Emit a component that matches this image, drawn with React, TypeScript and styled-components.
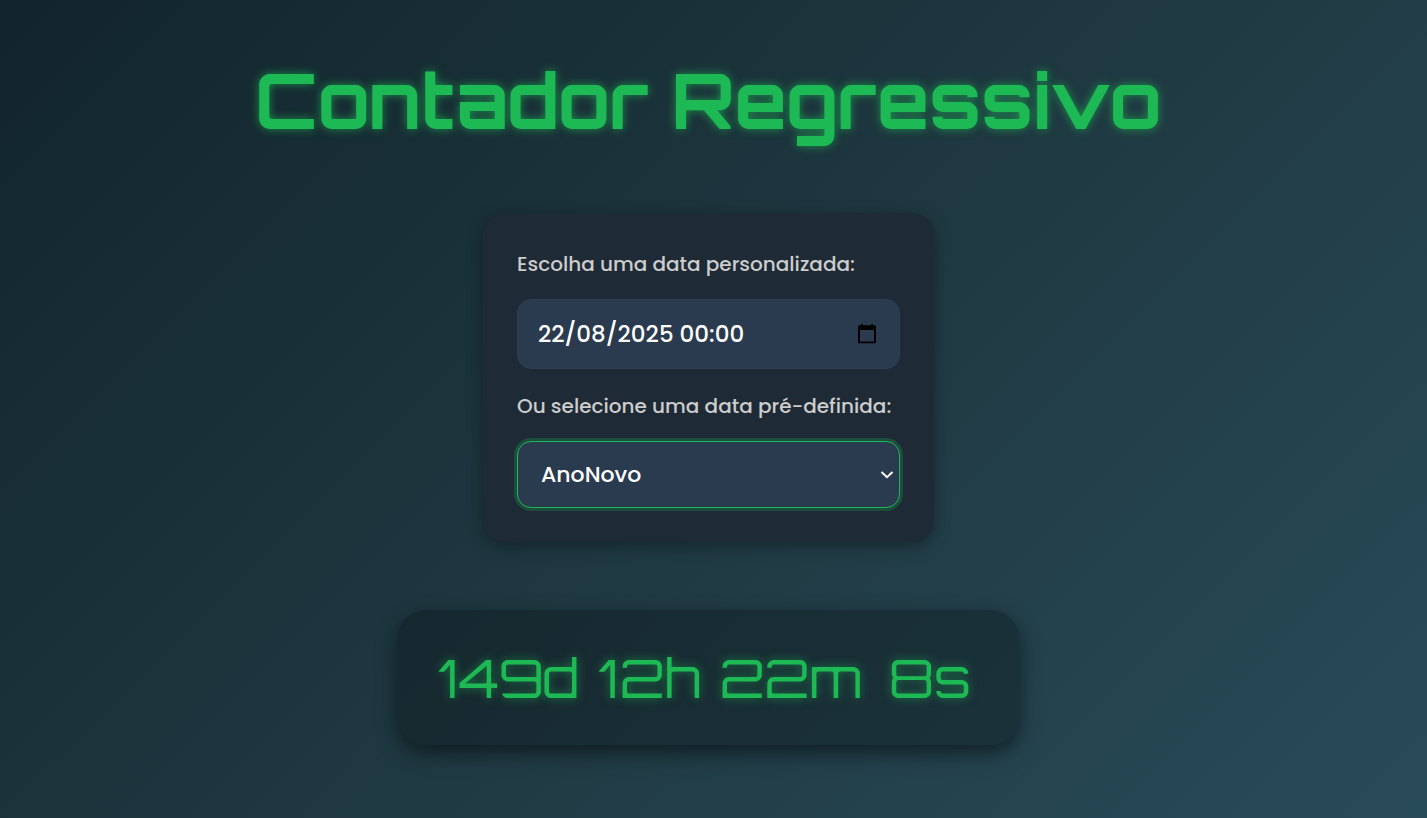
import React, { useState } from "react";
import styled, { createGlobalStyle, css } from "styled-components";

const GlobalStyle = createGlobalStyle`
  *, *::before, *::after { box-sizing: border-box; }
  body {
    margin: 0;
    background: #0f2027;
  }
`;

const display = '"Orbitron", "DejaVu Sans", sans-serif';
const body = '"Poppins", "Inter", sans-serif';
const green = "#1db954";

const Page = styled.main`
  display: flex;
  flex-direction: column;
  align-items: center;
  min-height: 100vh;
  padding: 54px 10px 54px 0;
  background: linear-gradient(135deg, #0f2027 -10%, #203a43 56%, #2c5364 122%);
  font-family: ${body};
`;

const Title = styled.h1`
  margin: 0 0 67px;
  color: ${green};
  font: 700 76px/92px ${display};
  text-align: center;
  text-shadow: 0 0 10px rgba(29, 185, 84, 0.7);
`;

const Card = styled.form`
  display: flex;
  flex-direction: column;
  gap: 20px;
  width: 100%;
  max-width: 451px;
  padding: 34px;
  border-radius: 22px;
  background: #1e2a36;
  box-shadow: 0 4px 16px rgba(0, 0, 0, 0.35);
`;

const Field = styled.div`
  display: flex;
  flex-direction: column;
  gap: 18px;
`;

const Label = styled.label`
  color: #cccccc;
  font-size: 20px;
  font-weight: 500;
  line-height: 34px;
  white-space: nowrap;
`;

const controlText = css`
  color: #ffffff;
  font-family: ${body};
  font-weight: 500;
`;

const DateBox = styled.div`
  display: flex;
  align-items: center;
  height: 70px;
  padding: 0 20px;
  border: 1px solid #2f3e50;
  border-radius: 14px;
  background: #2a3a4f;
`;

const DateInput = styled.input`
  ${controlText}
  flex: 1;
  min-width: 0;
  padding: 0;
  border: 0;
  outline: 0;
  background: transparent;
  font-size: 23px;
`;

const PickerButton = styled.button`
  display: flex;
  padding: 0;
  border: 0;
  background: transparent;
  color: #000000;
  cursor: pointer;
`;

const SelectBox = styled.div`
  display: grid;
  align-items: center;
  > * { grid-area: 1 / 1; }
`;

const Select = styled.select`
  ${controlText}
  width: 100%;
  height: 67px;
  padding: 0 23px;
  border: 1px solid ${green};
  border-radius: 14px;
  outline: 0;
  appearance: none;
  background: #2a3a4f;
  box-shadow: 0 0 0 3px rgba(29, 185, 84, 0.25);
  font-size: 22px;
`;

const Chevron = styled.svg`
  justify-self: end;
  margin-right: 6px;
  pointer-events: none;
`;

const Timer = styled.section`
  display: flex;
  justify-content: center;
  gap: 19px;
  width: 100%;
  max-width: 621px;
  margin-top: 68px;
  padding: 32px 38px 33px;
  border-radius: 28px;
  background: rgba(0, 0, 0, 0.25);
  box-shadow: 0 8px 20px rgba(0, 0, 0, 0.5);
  color: ${green};
  font: 400 54px/70px ${display};
  text-shadow: 0 0 10px rgba(29, 185, 84, 0.6);
`;

const Unit = styled.span`
  min-width: 98px;
  text-align: center;
`;

const occasions = ["AnoNovo", "Natal", "Páscoa"];
const remaining = ["149d", "12h", "22m", "8s"];

export default function App() {
  const [date, setDate] = useState("22/08/2025 00:00");
  const [occasion, setOccasion] = useState("AnoNovo");

  return (
    <>
      <GlobalStyle />
      <Page>
        <Title>Contador Regressivo</Title>
        <Card>
          <Field>
            <Label htmlFor="date">Escolha uma data personalizada:</Label>
            <DateBox>
              <DateInput id="date" type="text" value={date} onChange={(e) => setDate(e.target.value)} />
              <PickerButton type="button" aria-label="Abrir calendário">
                <svg width="24" height="22" viewBox="0 0 24 22" fill="currentColor" aria-hidden="true">
                  <path fillRule="evenodd" d="M6 1h2v1.3h8V1h2v1.3h2a1 1 0 0 1 1 1v16a1 1 0 0 1-1 1H4a1 1 0 0 1-1-1v-16a1 1 0 0 1 1-1h2zM5 7v11.6h14V7z" />
                </svg>
              </PickerButton>
            </DateBox>
          </Field>
          <Field>
            <Label htmlFor="occasion">Ou selecione uma data pré-definida:</Label>
            <SelectBox>
              <Select id="occasion" value={occasion} onChange={(e) => setOccasion(e.target.value)}>
                {occasions.map((name) => (
                  <option key={name}>{name}</option>
                ))}
              </Select>
              <Chevron width="14" height="10" viewBox="0 0 14 10" fill="none" stroke="#fff" strokeWidth="2" aria-hidden="true">
                <path d="M1.5 2 7 7.2 12.5 2" />
              </Chevron>
            </SelectBox>
          </Field>
        </Card>
        <Timer role="timer">
          {remaining.map((part) => (
            <Unit key={part}>{part}</Unit>
          ))}
        </Timer>
      </Page>
    </>
  );
}
